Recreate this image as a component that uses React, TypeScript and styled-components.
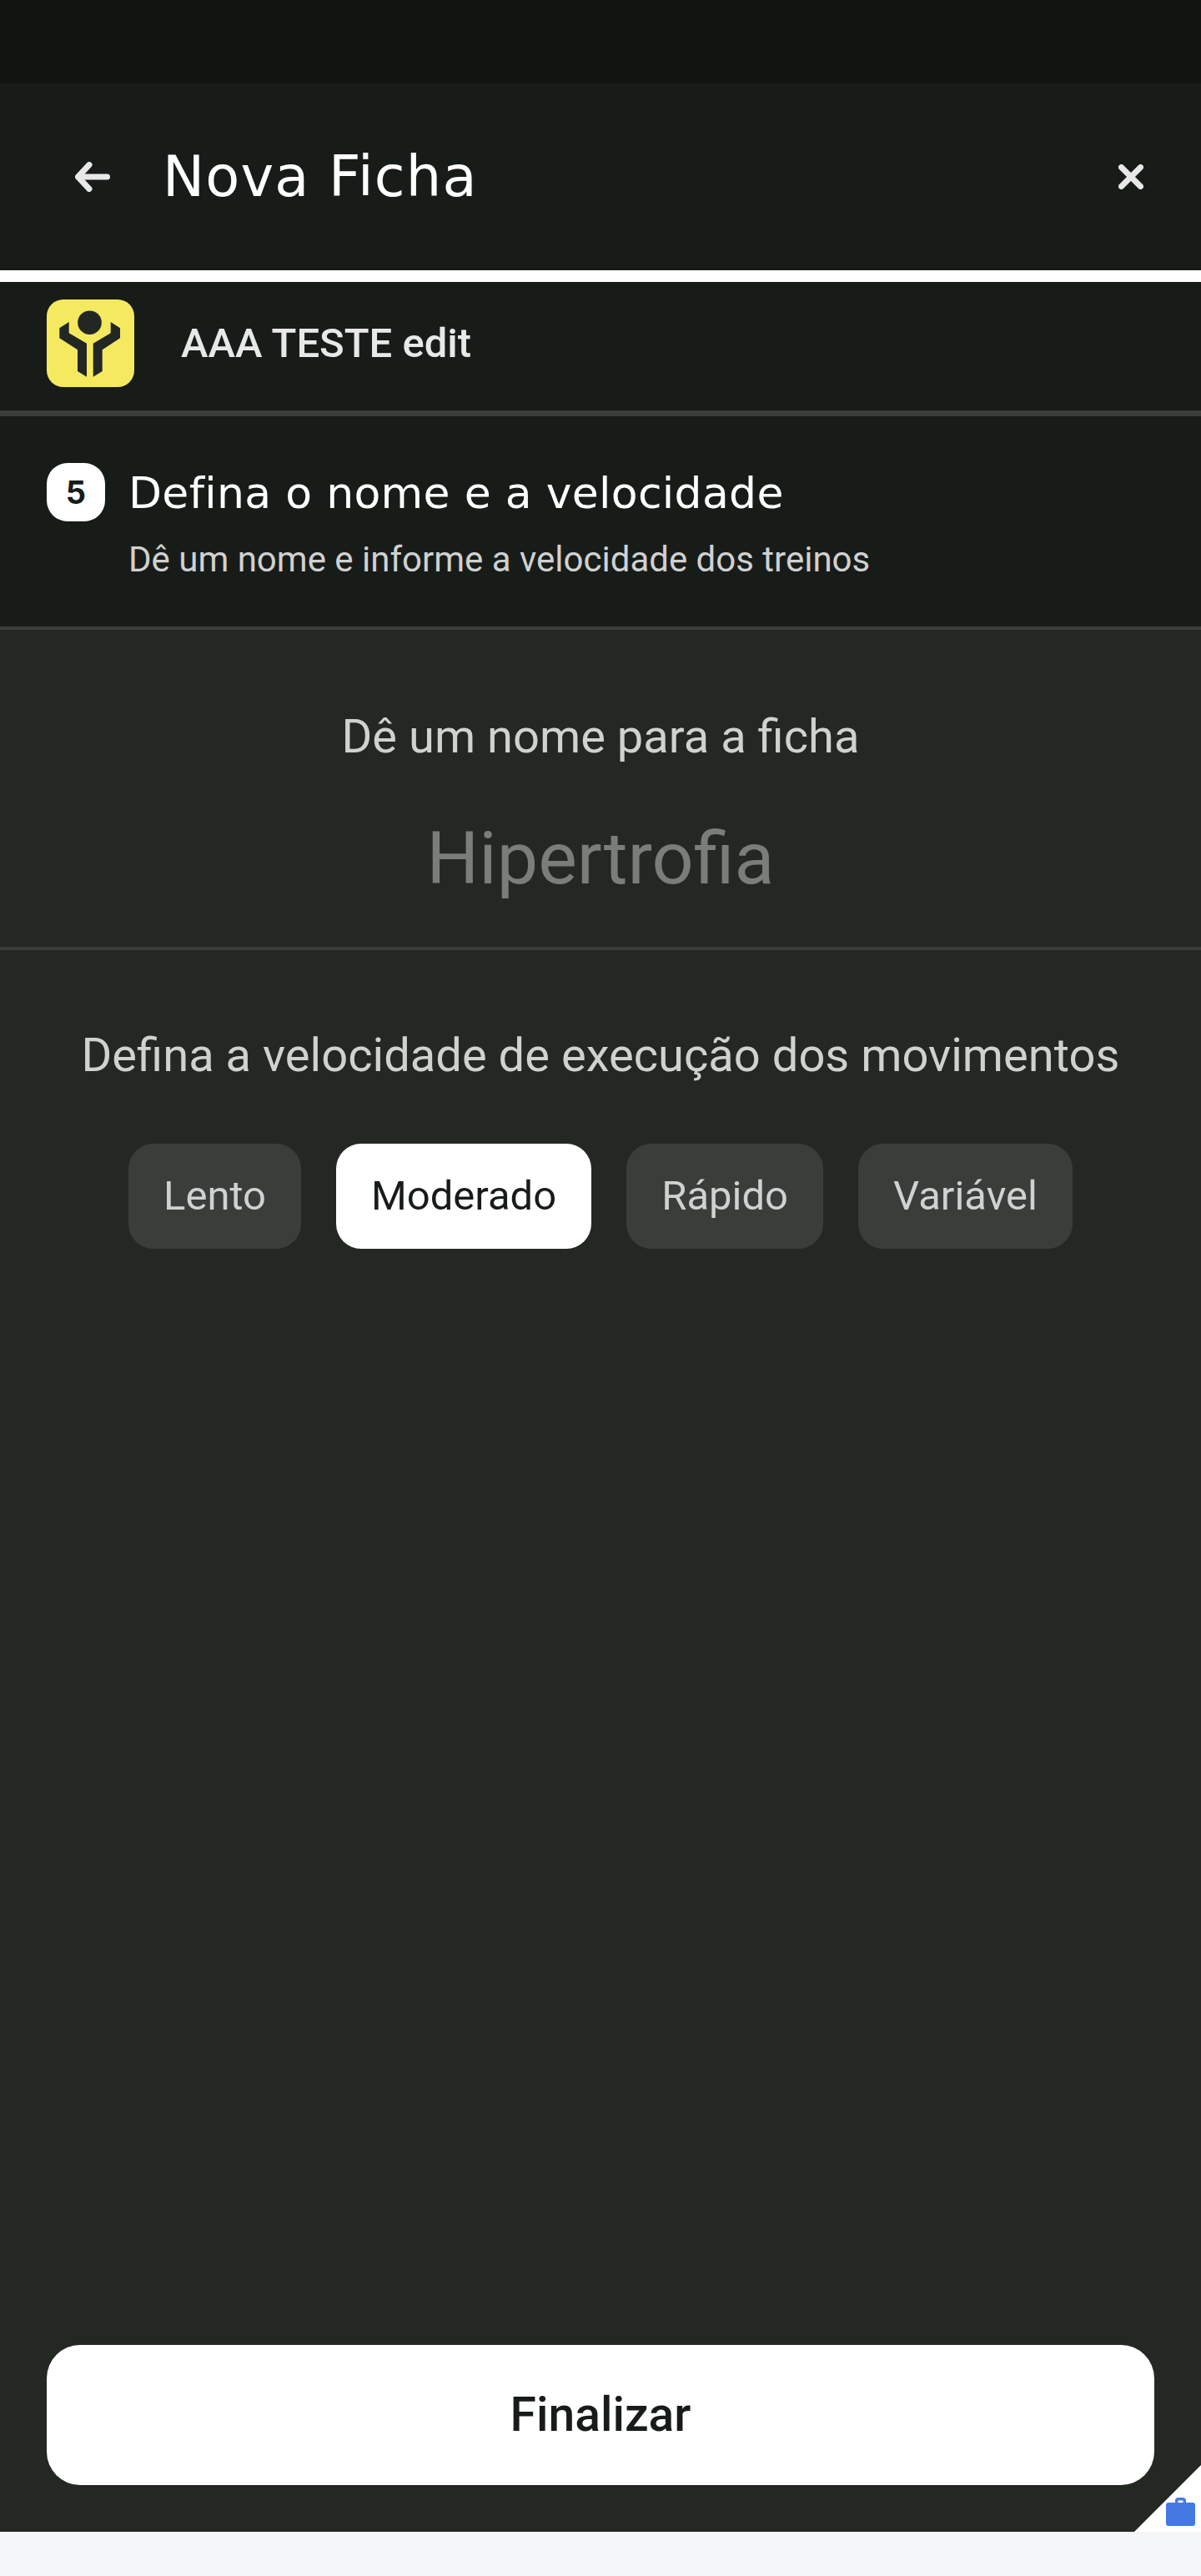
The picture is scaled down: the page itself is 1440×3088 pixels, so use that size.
import * as React from 'react';
import styled, { createGlobalStyle } from 'styled-components';

const GlobalStyle = createGlobalStyle`
    html, body {
        margin: 0;
        padding: 0;
        background: #f5f6f8;
    }
    * {
        box-sizing: border-box;
    }
`;

const Page = styled.div`
    display: flex;
    flex-direction: column;
    width: 1440px;
    height: 3088px;
    font-family: Roboto, "Liberation Sans", sans-serif;
    background: #f5f6f8;
`;

const StatusBar = styled.div`
    height: 100px;
    background: #121412;
`;

const Header = styled.header`
    display: flex;
    align-items: center;
    height: 224px;
    padding: 0 69px 0 90px;
    background: #181c19;
`;

const BackButton = styled.button`
    display: flex;
    padding: 0;
    border: 0;
    background: none;
`;

const HeaderTitle = styled.h1`
    flex: 1;
    margin: 0 0 0 63px;
    font-family: "DejaVu Sans", sans-serif;
    font-size: 67px;
    font-weight: 400;
    letter-spacing: 1.2px;
    color: #ffffff;
`;

const CloseButton = styled.button`
    display: flex;
    padding: 0;
    border: 0;
    background: none;
`;

const Progress = styled.div`
    height: 14px;
    background: #ffffff;
`;

const GymRow = styled.div`
    display: flex;
    align-items: center;
    gap: 56px;
    height: 154px;
    padding: 0 56px 7px;
    background: #181c19;
`;

const GymName = styled.span`
    font-size: 49px;
    font-weight: 500;
    color: #e8e8e8;
`;

const Divider = styled.div<{ $height: number }>`
    height: ${(props) => props.$height}px;
    background: #3a3e3b;
`;

const StepSection = styled.section`
    display: flex;
    gap: 28px;
    height: 252px;
    padding: 56px 56px 0;
    background: #181c19;
`;

const StepBadge = styled.div`
    display: flex;
    align-items: center;
    justify-content: center;
    width: 70px;
    height: 70px;
    border-radius: 25px;
    font-family: Inter, sans-serif;
    font-size: 38px;
    font-weight: 700;
    color: #181c19;
    background: #ffffff;
`;

const StepText = styled.div`
    display: flex;
    flex-direction: column;
    gap: 20px;
    padding-top: 4px;
`;

const StepTitle = styled.h2`
    margin: 0;
    font-family: "DejaVu Sans", sans-serif;
    font-size: 52px;
    font-weight: 400;
    letter-spacing: 0.3px;
    line-height: 64px;
    color: #ffffff;
`;

const StepSubtitle = styled.p`
    margin: 0;
    font-size: 42px;
    line-height: 56px;
    color: #d0d1d0;
`;

const Content = styled.main`
    flex: 1;
    display: flex;
    flex-direction: column;
    background: #242823;
`;

const NameBlock = styled.section`
    display: flex;
    flex-direction: column;
    align-items: center;
    height: 380px;
    padding-top: 90px;
`;

const Prompt = styled.p`
    margin: 0;
    font-size: 56.1px;
    line-height: 76px;
    color: #d0d1d0;
`;

const NameInput = styled.div`
    margin-top: 58px;
    font-size: 88px;
    line-height: 100px;
    color: #7a7d7a;
`;

const SpeedBlock = styled.section`
    flex: 1;
    display: flex;
    flex-direction: column;
    align-items: center;
    padding-top: 88px;
`;

const SpeedOptions = styled.div`
    display: flex;
    gap: 42px;
    margin-top: 68px;
`;

const SpeedButton = styled.button<{ $active?: boolean }>`
    height: 126px;
    padding: 0 42px 2px;
    border: 0;
    border-radius: 30px;
    font-family: Roboto, sans-serif;
    font-size: 49px;
    color: ${(props) => (props.$active ? '#181c19' : '#d0d1d0')};
    background: ${(props) => (props.$active ? '#ffffff' : '#3a3e3b')};
`;

const Footer = styled.div`
    position: relative;
    padding: 0 56px 56px;
`;

const SubmitButton = styled.button`
    width: 100%;
    height: 168px;
    padding-bottom: 2px;
    border: 0;
    border-radius: 40px;
    font-family: Roboto, sans-serif;
    font-size: 57px;
    font-weight: 500;
    color: #181c19;
    background: #ffffff;
`;

const CornerBadge = styled.div`
    position: absolute;
    right: 0;
    bottom: 0;
    width: 80px;
    height: 80px;
    background: #ffffff;
    clip-path: polygon(100% 0, 100% 100%, 0 100%);
`;

const CornerIcon = styled.svg`
    position: absolute;
    right: 7px;
    bottom: 7px;
`;

const BottomStrip = styled.div`
    height: 53px;
    background: #f5f6f8;
`;

const GymLogo = () => (
    <svg width="105" height="105" viewBox="0 0 105 105">
        <rect width="105" height="105" rx="20" fill="#f5e960" />
        <circle cx="51.5" cy="27.7" r="14.3" fill="#232723" />
        <polygon points="26.7,27 15.3,34.3 15.3,46.3 37,60.3 37,86 48,92.7 48,52.7 26.7,40.3" fill="#232723" />
        <polygon points="76.7,27 88,34.3 88,46.3 66.7,60.3 66.7,86 55.7,92.7 55.7,52.7 76.7,40.3" fill="#232723" />
    </svg>
);

const App: React.FC = () => (
    <Page>
        <GlobalStyle />
        <StatusBar />
        <Header>
            <BackButton aria-label="Voltar">
                <svg width="42" height="36" viewBox="0 0 42 36" fill="none" stroke="#e8e8e8" strokeWidth="7" strokeLinecap="round" strokeLinejoin="round">
                    <path d="M3.500 18h35M17 3.500 3.500 18 17 32.500" />
                </svg>
            </BackButton>
            <HeaderTitle>Nova Ficha</HeaderTitle>
            <CloseButton aria-label="Fechar">
                <svg width="30" height="30" viewBox="0 0 30 30" fill="none" stroke="#e8e8e8" strokeWidth="7" strokeLinecap="round">
                    <path d="M3.500 3.500l23 23M26.500 3.500l-23 23" />
                </svg>
            </CloseButton>
        </Header>
        <Progress />
        <GymRow>
            <GymLogo />
            <GymName>AAA TESTE edit</GymName>
        </GymRow>
        <Divider $height={7} />
        <StepSection>
            <StepBadge>5</StepBadge>
            <StepText>
                <StepTitle>Defina o nome e a velocidade</StepTitle>
                <StepSubtitle>Dê um nome e informe a velocidade dos treinos</StepSubtitle>
            </StepText>
        </StepSection>
        <Divider $height={4} />
        <Content>
            <NameBlock>
                <Prompt>Dê um nome para a ficha</Prompt>
                <NameInput>Hipertrofia</NameInput>
            </NameBlock>
            <Divider $height={4} />
            <SpeedBlock>
                <Prompt>Defina a velocidade de execução dos movimentos</Prompt>
                <SpeedOptions>
                    <SpeedButton>Lento</SpeedButton>
                    <SpeedButton $active>Moderado</SpeedButton>
                    <SpeedButton>Rápido</SpeedButton>
                    <SpeedButton>Variável</SpeedButton>
                </SpeedOptions>
            </SpeedBlock>
            <Footer>
                <SubmitButton>Finalizar</SubmitButton>
                <CornerBadge>
                    <CornerIcon width="35" height="34" viewBox="0 0 35 34">
                        <path fill="#4479e4" d="M11 6V4a4 4 0 0 1 4-4h5a4 4 0 0 1 4 4v2h8a3 3 0 0 1 3 3v22a3 3 0 0 1-3 3H3a3 3 0 0 1-3-3V9a3 3 0 0 1 3-3zm3.500 0h6V3.500h-6z" fillRule="evenodd" />
                    </CornerIcon>
                </CornerBadge>
            </Footer>
        </Content>
        <BottomStrip />
    </Page>
);

export default App;
